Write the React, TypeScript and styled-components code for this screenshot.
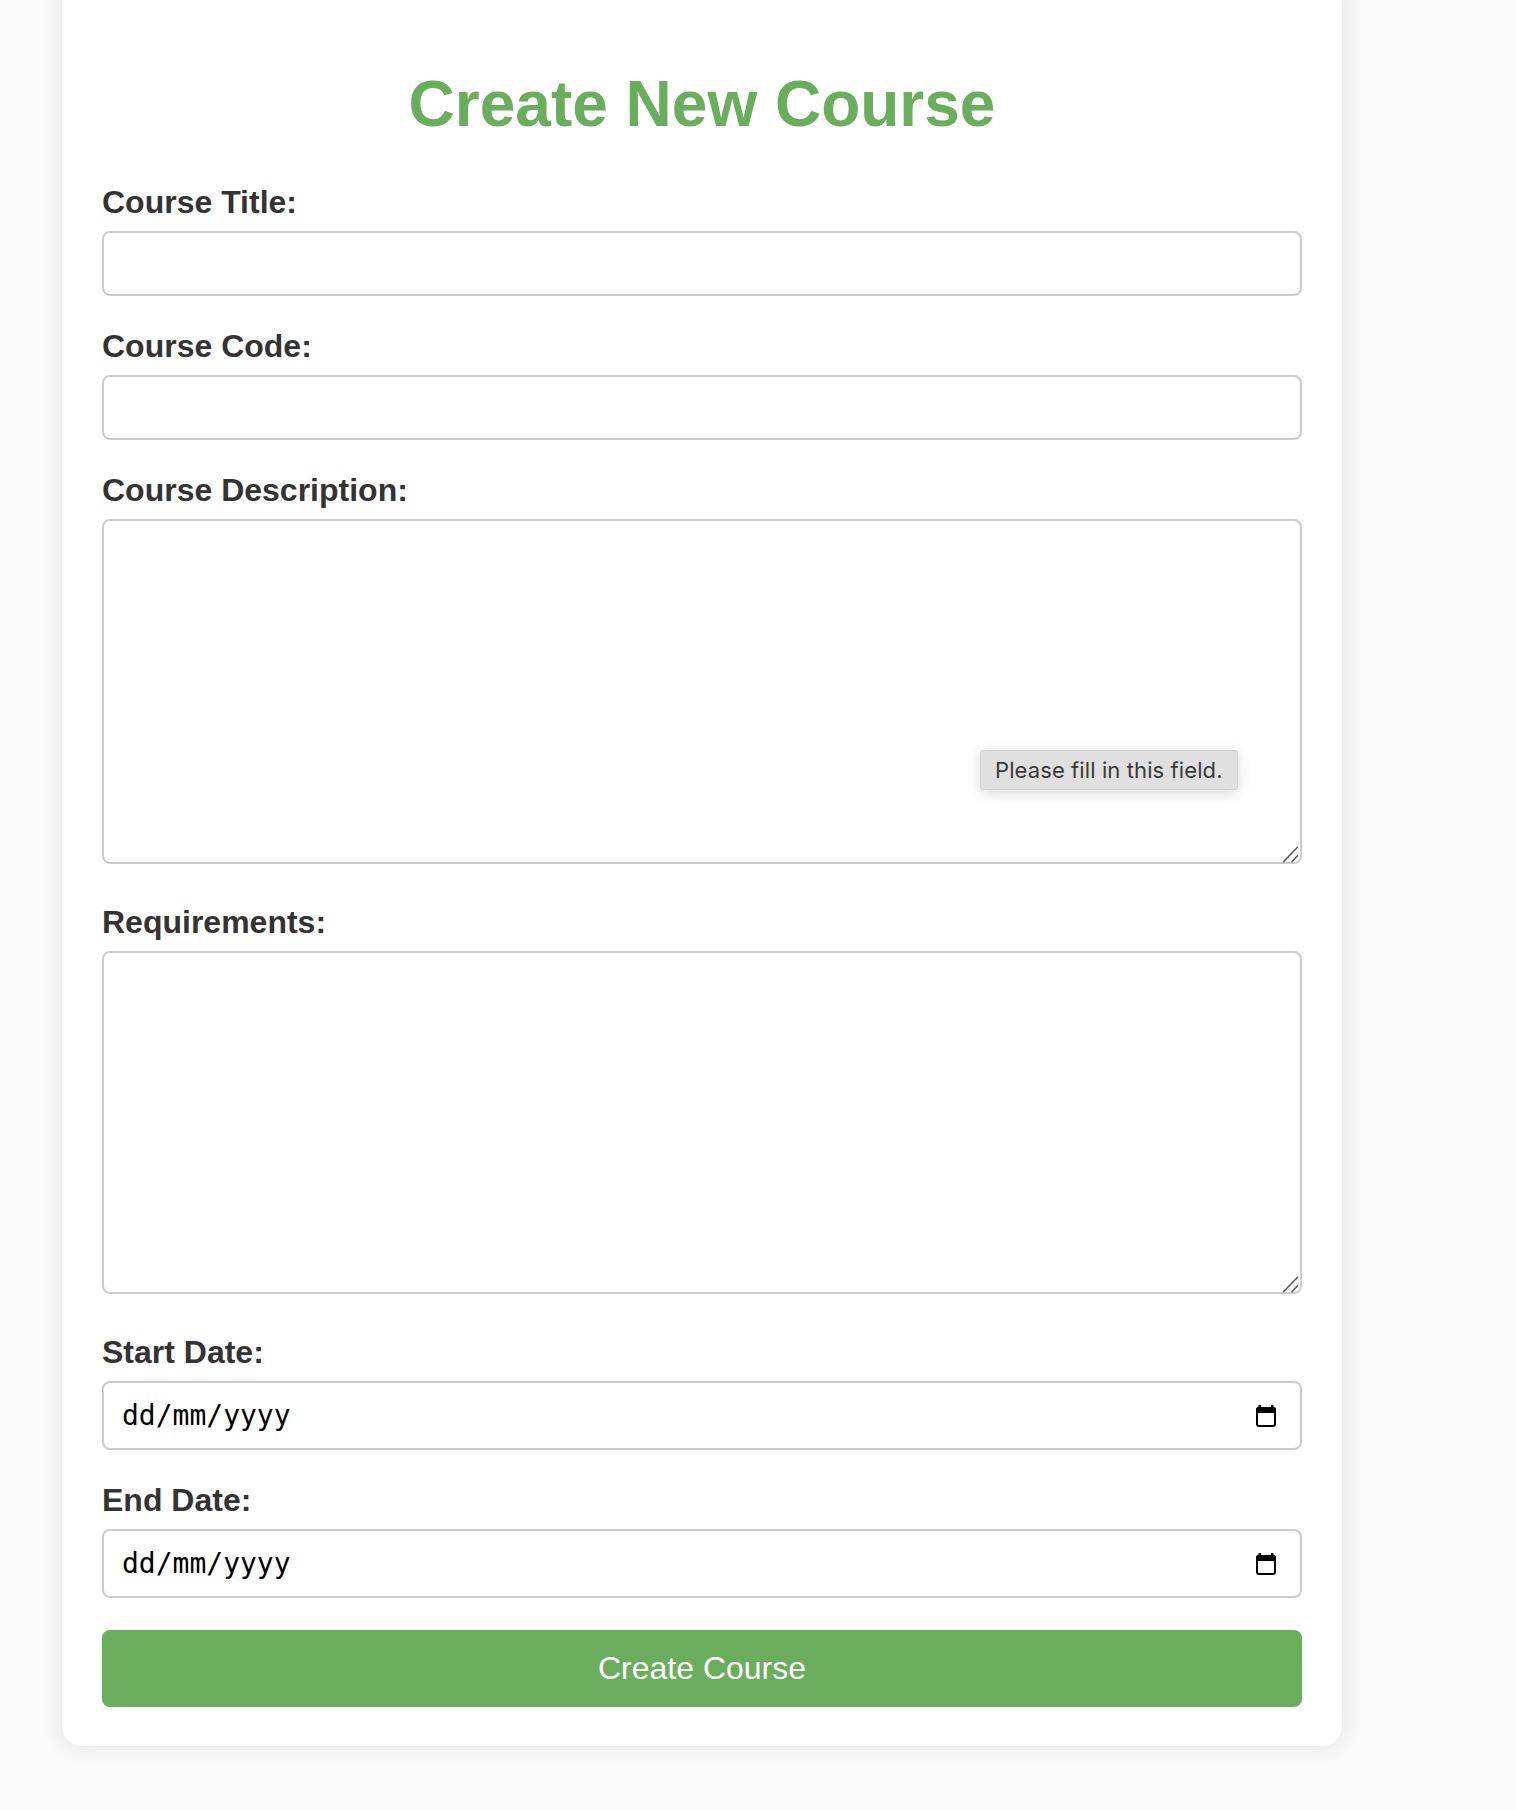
import React from "react";
import styled, { createGlobalStyle } from "styled-components";

const GlobalStyle = createGlobalStyle`
  html, body {
    margin: 0;
    padding: 0;
    background: #f9f9f9;
  }
  body {
    font-family: "Liberation Sans", Arial, sans-serif;
    min-height: 100vh;
  }
  *, *::before, *::after {
    box-sizing: border-box;
  }
`;

const Page = styled.div`
  padding: 0 0 64px 62px;
`;

const Card = styled.div`
  width: 1280px;
  margin-top: -24px;
  padding: 91px 40px 39px;
  background: #ffffff;
  border-radius: 20px;
  box-shadow: 0 0 22px rgba(0, 0, 0, 0.09);
`;

const Title = styled.h1`
  margin: 0 0 43px;
  font-size: 64px;
  line-height: 74px;
  font-weight: 700;
  color: #69ad5d;
  text-align: center;
`;

const Form = styled.form`
  display: flex;
  flex-direction: column;
`;

const Field = styled.div<{ $after: number }>`
  display: flex;
  flex-direction: column;
  margin-bottom: ${(p) => p.$after}px;
`;

const Label = styled.label`
  display: block;
  margin-bottom: 10px;
  font-size: 32px;
  line-height: 37px;
  font-weight: 700;
  color: #333333;
`;

const TextInput = styled.input`
  display: block;
  width: 100%;
  height: 65px;
  padding: 0 18px;
  border: 2px solid #cccccc;
  border-radius: 8px;
  background: #ffffff;
  font-family: "Liberation Sans", Arial, sans-serif;
  font-size: 28px;
  color: #000;
  outline: none;
`;

const ControlWrap = styled.div`
  position: relative;
`;

const TextArea = styled.textarea<{ $h: number }>`
  display: block;
  width: 100%;
  height: ${(p) => p.$h}px;
  padding: 16px 18px;
  border: 2px solid #cccccc;
  border-radius: 8px;
  background: #ffffff;
  font-family: "Liberation Sans", Arial, sans-serif;
  font-size: 28px;
  outline: none;
  resize: none;
`;

const ResizeGrip = styled.svg`
  position: absolute;
  right: 2px;
  bottom: 1px;
  width: 18px;
  height: 18px;
  pointer-events: none;
`;

const Tooltip = styled.div`
  position: absolute;
  left: 878px;
  top: 231px;
  height: 40px;
  padding: 0 14px;
  display: flex;
  align-items: center;
  background: #e0e0e0;
  border: 1px solid #d2d2d2;
  border-radius: 3px;
  box-shadow: 0 3px 14px rgba(0, 0, 0, 0.15);
  font-family: Inter, "Noto Sans", sans-serif;
  font-size: 22px;
  letter-spacing: 0.1px;
  color: #3a3a3a;
  white-space: nowrap;
`;

const DateBox = styled.div`
  display: flex;
  align-items: center;
  justify-content: space-between;
  height: 69px;
  padding: 0 24px 0 18px;
  border: 2px solid #cccccc;
  border-radius: 8px;
  background: #ffffff;
`;

const DateText = styled.input`
  flex: 1;
  min-width: 0;
  padding: 0;
  border: none;
  outline: none;
  background: transparent;
  font-family: "DejaVu Sans Mono", "Liberation Mono", monospace;
  font-size: 28px;
  color: #000;

  &::placeholder {
    color: #000;
    opacity: 1;
  }
`;

const CalendarIcon = styled.svg`
  width: 20px;
  height: 22px;
  flex: none;
`;

const SubmitButton = styled.button`
  width: 100%;
  height: 77px;
  border: none;
  border-radius: 8px;
  background: #69ad5d;
  color: #ffffff;
  font-family: "Liberation Sans", Arial, sans-serif;
  font-size: 32px;
  cursor: pointer;
`;

const Calendar = () => (
  <CalendarIcon viewBox="0 0 20 22" aria-hidden="true">
    <rect x="2.5" y="0" width="2.6" height="3.5" fill="#000" />
    <rect x="14.9" y="0" width="2.6" height="3.5" fill="#000" />
    <path d="M0 4.5 A2.5 2.5 0 0 1 2.5 2 H17.5 A2.5 2.5 0 0 1 20 4.5 V8 H0 Z" fill="#000" />
    <rect x="1" y="3" width="18" height="18" rx="2" fill="none" stroke="#000" strokeWidth="2" />
  </CalendarIcon>
);

const Grip = () => (
  <ResizeGrip viewBox="0 0 18 18" aria-hidden="true">
    <line x1="1.5" y1="16.7" x2="15.5" y2="2.3" stroke="#5a5a5a" strokeWidth="1.6" strokeLinecap="round" />
    <line x1="9.9" y1="16.7" x2="15.5" y2="10.7" stroke="#5a5a5a" strokeWidth="1.6" strokeLinecap="round" />
  </ResizeGrip>
);

const DateField = ({ id }: { id: string }) => (
  <DateBox>
    <DateText id={id} type="text" placeholder="dd/mm/yyyy" />
    <Calendar />
  </DateBox>
);

export default function App() {
  return (
    <>
      <GlobalStyle />
      <Page>
        <Card>
          <Title>Create New Course</Title>
          <Form onSubmit={(e) => e.preventDefault()}>
            <Field $after={32}>
              <Label htmlFor="title">Course Title:</Label>
              <TextInput id="title" type="text" />
            </Field>
            <Field $after={32}>
              <Label htmlFor="code">Course Code:</Label>
              <TextInput id="code" type="text" />
            </Field>
            <Field $after={40}>
              <Label htmlFor="desc">Course Description:</Label>
              <ControlWrap>
                <TextArea id="desc" $h={345} />
                <Grip />
                <Tooltip>Please fill in this field.</Tooltip>
              </ControlWrap>
            </Field>
            <Field $after={40}>
              <Label htmlFor="req">Requirements:</Label>
              <ControlWrap>
                <TextArea id="req" $h={343} />
                <Grip />
              </ControlWrap>
            </Field>
            <Field $after={32}>
              <Label htmlFor="start">Start Date:</Label>
              <DateField id="start" />
            </Field>
            <Field $after={32}>
              <Label htmlFor="end">End Date:</Label>
              <DateField id="end" />
            </Field>
            <SubmitButton type="submit">Create Course</SubmitButton>
          </Form>
        </Card>
      </Page>
    </>
  );
}
